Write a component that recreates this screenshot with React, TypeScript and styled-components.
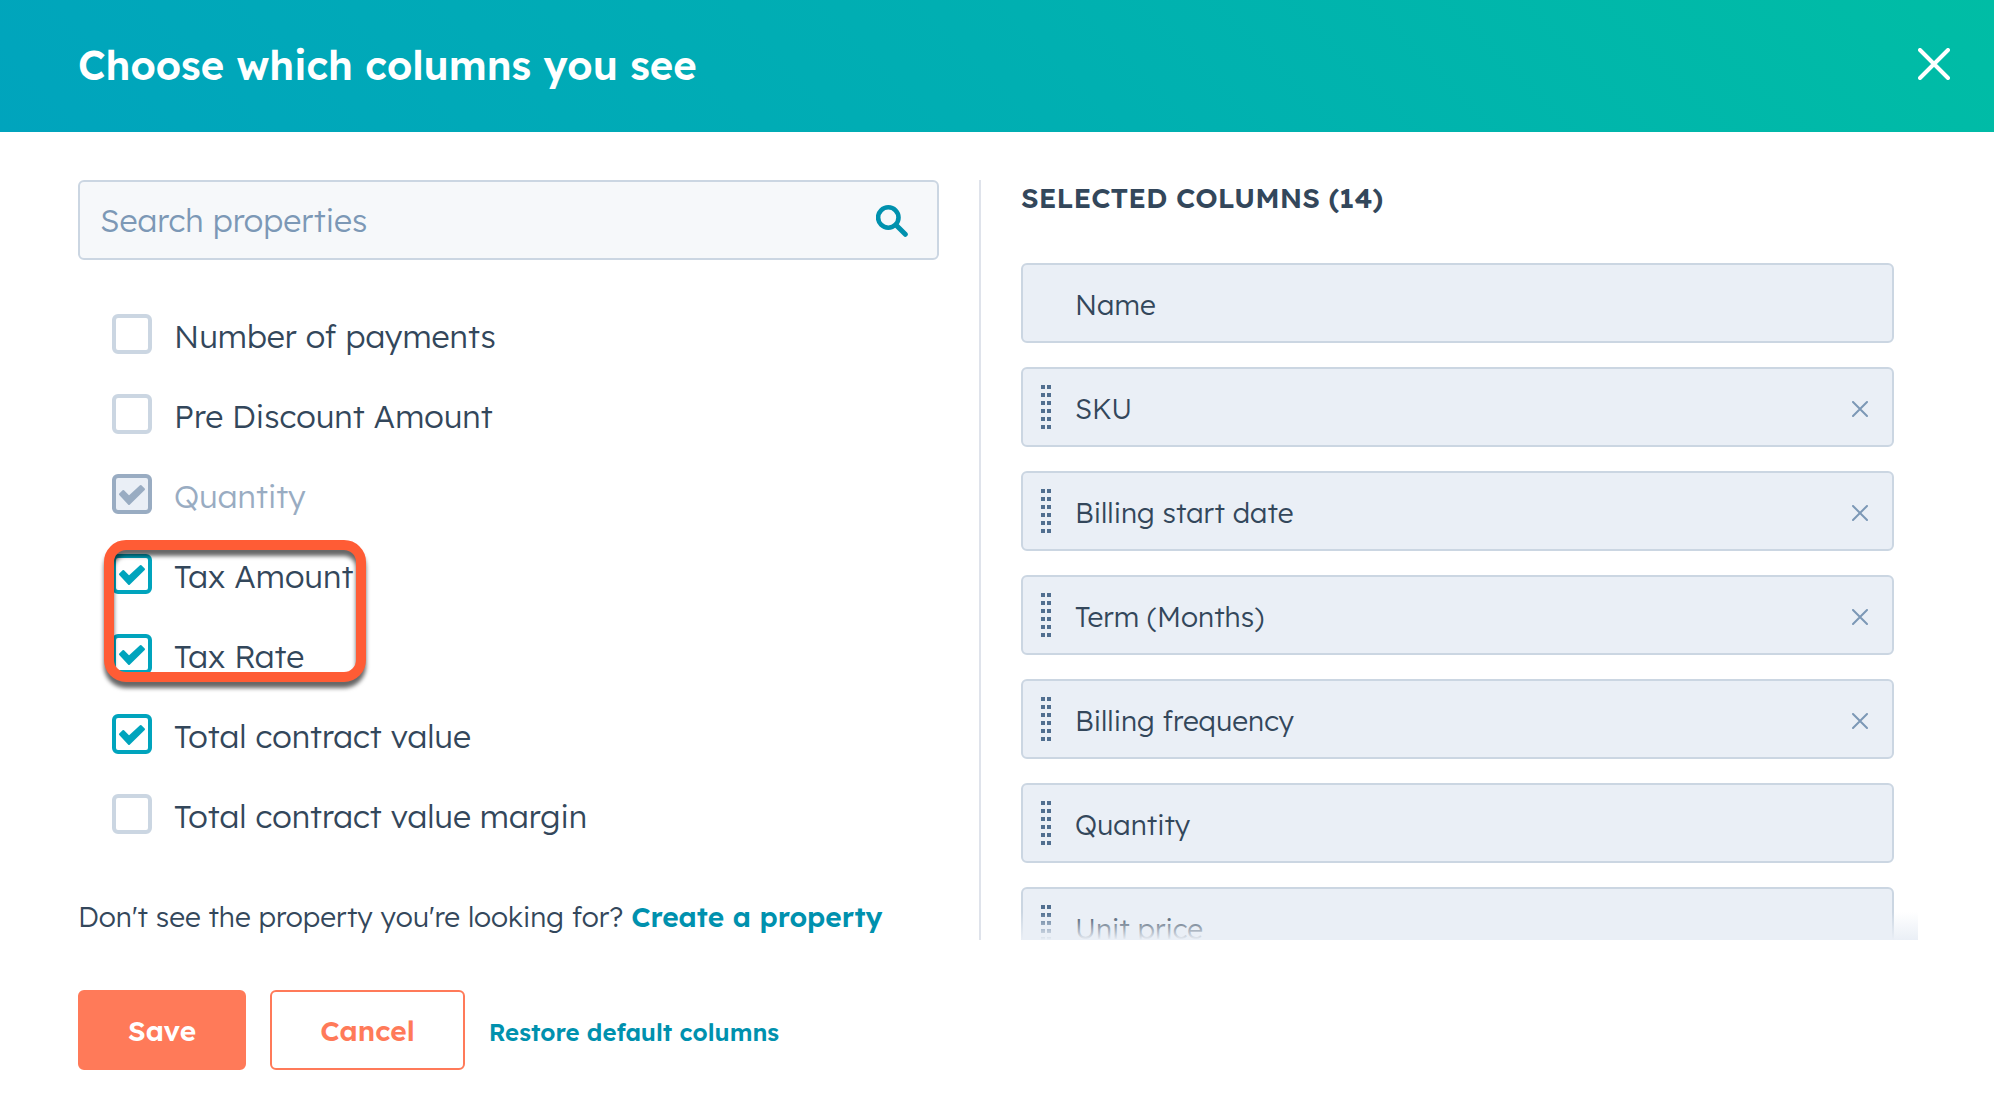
import React, { useState } from "react";
import styled, { createGlobalStyle } from "styled-components";

const color = {
  text: "#33475b",
  link: "#0091ae",
  accent: "#00a4bd",
  border: "#cbd6e2",
  divider: "#dfe3eb",
  tile: "#eaeff6",
  field: "#f6f8fa",
  muted: "#7c98b6",
  disabled: "#99acc2",
  grip: "#516f90",
  primary: "#ff7a59",
  ring: "#ff5c35",
};

const GlobalStyle = createGlobalStyle`
  *, *::before, *::after { box-sizing: border-box; }
  body {
    margin: 0;
    background: #fff;
    color: ${color.text};
    font-family: "Lexend Deca", Inter, "Open Sans", sans-serif;
    font-size: 28px;
    font-weight: 300;
  }
  button, input { font: inherit; }
`;

const Dialog = styled.div`
  display: flex;
  flex-direction: column;
  height: 100vh;
`;

const Header = styled.header`
  flex: none;
  display: flex;
  align-items: center;
  justify-content: space-between;
  height: 132px;
  padding: 0 44px 4px 78px;
  background: linear-gradient(45deg, #00a4bd, #00afb2 50%, #00bda5);
  color: #fff;
`;

const Title = styled.h1`
  margin: 0;
  padding-top: 2px;
  font-size: 40px;
  font-weight: 600;
`;

const IconButton = styled.button`
  flex: none;
  display: flex;
  padding: 0;
  border: 0;
  background: none;
  color: inherit;
  cursor: pointer;
`;

const Body = styled.main`
  flex: 1;
  min-height: 0;
  display: grid;
  grid-template-columns: calc(50% - 19px) minmax(0, 1fr);
  padding: 48px 76px 0 78px;
`;

const Picker = styled.section`
  display: flex;
  flex-direction: column;
  min-height: 0;
  padding-right: 40px;
`;

const SearchBox = styled.label`
  flex: none;
  display: flex;
  align-items: center;
  height: 80px;
  padding: 0 28px 0 20px;
  border: 2px solid ${color.border};
  border-radius: 6px;
  background: ${color.field};
  color: ${color.link};
`;

const SearchInput = styled.input`
  flex: 1;
  min-width: 0;
  padding: 0;
  border: 0;
  outline: 0;
  background: none;
  color: ${color.text};
  font-size: 32px;
  &::placeholder { color: ${color.muted}; opacity: 1; }
`;

const PropertyList = styled.ul`
  position: relative;
  margin: 0;
  padding: 54px 0 0 34px;
  list-style: none;
`;

const PropertyRow = styled.li`
  height: 80px;
`;

const PropertyLabel = styled.label<{ $disabled: boolean }>`
  display: inline-flex;
  align-items: flex-start;
  gap: 22px;
  color: ${(p) => (p.$disabled ? color.disabled : color.text)};
  font-size: 32px;
  line-height: 44px;
`;

const BoxWrap = styled.span`
  display: grid;
  width: 40px;
  height: 40px;
  > * { grid-area: 1 / 1; }
`;

const Box = styled.input`
  appearance: none;
  width: 40px;
  height: 40px;
  margin: 0;
  border: 4px solid ${color.border};
  border-radius: 6px;
  background: #fff;
  &:checked { border-color: ${color.accent}; }
  &:disabled { border-color: ${color.disabled}; background: ${color.tile}; }
`;

const Tick = styled.svg`
  pointer-events: none;
  color: ${color.accent};
  ${Box}:disabled + & { color: ${color.disabled}; }
`;

const Highlight = styled.div`
  position: absolute;
  top: 280px;
  left: 26px;
  width: 262px;
  height: 142px;
  border: 10px solid ${color.ring};
  border-radius: 22px;
  filter: drop-shadow(0 6px 2px rgba(0, 0, 0, 0.6));
  pointer-events: none;
`;

const Hint = styled.p`
  margin: auto 0 0;
  line-height: 46px;
`;

const TextLink = styled.a<{ $small?: boolean }>`
  color: ${color.link};
  font-size: ${(p) => (p.$small ? 24 : 28)}px;
  font-weight: 600;
  text-decoration: none;
`;

const Selected = styled.section`
  position: relative;
  min-height: 0;
  overflow: hidden;
  padding-left: 40px;
  border-left: 2px solid ${color.divider};
  &::after {
    content: "";
    position: absolute;
    inset: auto 0 0 40px;
    height: 28px;
    background: linear-gradient(rgba(234, 239, 246, 0), ${color.tile});
    pointer-events: none;
  }
`;

const SelectedTitle = styled.h2`
  margin: 0;
  font-size: 28px;
  font-weight: 600;
  line-height: 36px;
`;

const TileList = styled.ul`
  display: grid;
  gap: 24px;
  margin: 0;
  padding: 47px 24px 0 0;
  list-style: none;
`;

const Tile = styled.li`
  display: grid;
  grid-template-columns: 34px minmax(0, 1fr) 16px;
  align-items: center;
  height: 80px;
  padding: 0 24px 0 18px;
  border: 2px solid ${color.border};
  border-radius: 6px;
  background: ${color.tile};
`;

const GripDots = styled.svg`
  fill: ${color.grip};
  cursor: grab;
`;

const TileName = styled.span`
  grid-column: 2;
  padding-top: 2px;
`;

const RemoveButton = styled(IconButton)`
  margin-top: 4px;
  color: ${color.muted};
`;

const Footer = styled.footer`
  flex: none;
  display: flex;
  align-items: center;
  gap: 24px;
  padding: 50px 78px 46px;
`;

const RestoreLink = styled(TextLink)`
  padding-top: 4px;
`;

const Button = styled.button<{ $primary?: boolean }>`
  height: 80px;
  padding: 0 48px;
  border: 2px solid ${color.primary};
  border-radius: 6px;
  background: ${(p) => (p.$primary ? color.primary : "#fff")};
  color: ${(p) => (p.$primary ? "#fff" : color.primary)};
  font-weight: 600;
  cursor: pointer;
`;

const Cross = ({ size, stroke }: { size: number; stroke: number }) => (
  <svg width={size} height={size} viewBox={`0 0 ${size} ${size}`} aria-hidden="true">
    <path
      d={`M${stroke / 2} ${stroke / 2}L${size - stroke / 2} ${size - stroke / 2}M${size - stroke / 2} ${stroke / 2}L${stroke / 2} ${size - stroke / 2}`}
      stroke="currentColor"
      strokeWidth={stroke}
      strokeLinecap="round"
    />
  </svg>
);

const Magnifier = () => (
  <svg width="33" height="34" viewBox="0 0 33 34" fill="none" stroke="currentColor" aria-hidden="true">
    <circle cx="12.3" cy="14.5" r="10.2" strokeWidth="4.6" />
    <path d="M20 22L29.3 31.3" strokeWidth="5" strokeLinecap="round" />
  </svg>
);

const Grip = () => (
  <GripDots width="10" height="44" viewBox="0 0 10 44" aria-hidden="true">
    {[0, 8, 16, 24, 32, 40].map((y) => (
      <path key={y} d={`M0 ${y}h4v4h-4zM6 ${y}h4v4h-4z`} />
    ))}
  </GripDots>
);

const properties = [
  { name: "Number of payments", checked: false },
  { name: "Pre Discount Amount", checked: false },
  { name: "Quantity", checked: true, disabled: true },
  { name: "Tax Amount", checked: true },
  { name: "Tax Rate", checked: true },
  { name: "Total contract value", checked: true },
  { name: "Total contract value margin", checked: false },
];

const columns = [
  { name: "Name", fixed: true },
  { name: "SKU", removable: true },
  { name: "Billing start date", removable: true },
  { name: "Term (Months)", removable: true },
  { name: "Billing frequency", removable: true },
  { name: "Quantity" },
  { name: "Unit price" },
];

function Property({ name, checked, disabled = false }: { name: string; checked: boolean; disabled?: boolean }) {
  const [on, setOn] = useState(checked);
  return (
    <PropertyRow>
      <PropertyLabel $disabled={disabled}>
        <BoxWrap>
          <Box type="checkbox" checked={on} disabled={disabled} onChange={() => setOn(!on)} />
          {on && (
            <Tick width="40" height="40" viewBox="0 0 40 40" aria-hidden="true">
              <path
                d="M8 20.3L11.3 17L17 22.8L28.7 12L32 15.3L17 30Z"
                fill="currentColor"
                stroke="currentColor"
                strokeWidth="2"
                strokeLinejoin="round"
              />
            </Tick>
          )}
        </BoxWrap>
        {name}
      </PropertyLabel>
    </PropertyRow>
  );
}

export default function App() {
  return (
    <>
      <GlobalStyle />
      <Dialog role="dialog" aria-labelledby="dialog-title">
        <Header>
          <Title id="dialog-title">Choose which columns you see</Title>
          <IconButton type="button" aria-label="Close">
            <Cross size={32} stroke={4} />
          </IconButton>
        </Header>
        <Body>
          <Picker>
            <SearchBox>
              <SearchInput type="text" placeholder="Search properties" aria-label="Search properties" />
              <Magnifier />
            </SearchBox>
            <PropertyList>
              {properties.map((p) => (
                <Property key={p.name} {...p} />
              ))}
              <Highlight as="li" aria-hidden="true" />
            </PropertyList>
            <Hint>
              Don't see the property you're looking for? <TextLink href="#create">Create a property</TextLink>
            </Hint>
          </Picker>
          <Selected>
            <SelectedTitle>SELECTED COLUMNS (14)</SelectedTitle>
            <TileList>
              {columns.map((c) => (
                <Tile key={c.name}>
                  {!c.fixed && <Grip />}
                  <TileName>{c.name}</TileName>
                  {c.removable && (
                    <RemoveButton type="button" aria-label={`Remove ${c.name}`}>
                      <Cross size={16} stroke={2} />
                    </RemoveButton>
                  )}
                </Tile>
              ))}
            </TileList>
          </Selected>
        </Body>
        <Footer>
          <Button type="button" $primary>
            Save
          </Button>
          <Button type="button">Cancel</Button>
          <RestoreLink href="#restore" $small>
            Restore default columns
          </RestoreLink>
        </Footer>
      </Dialog>
    </>
  );
}
